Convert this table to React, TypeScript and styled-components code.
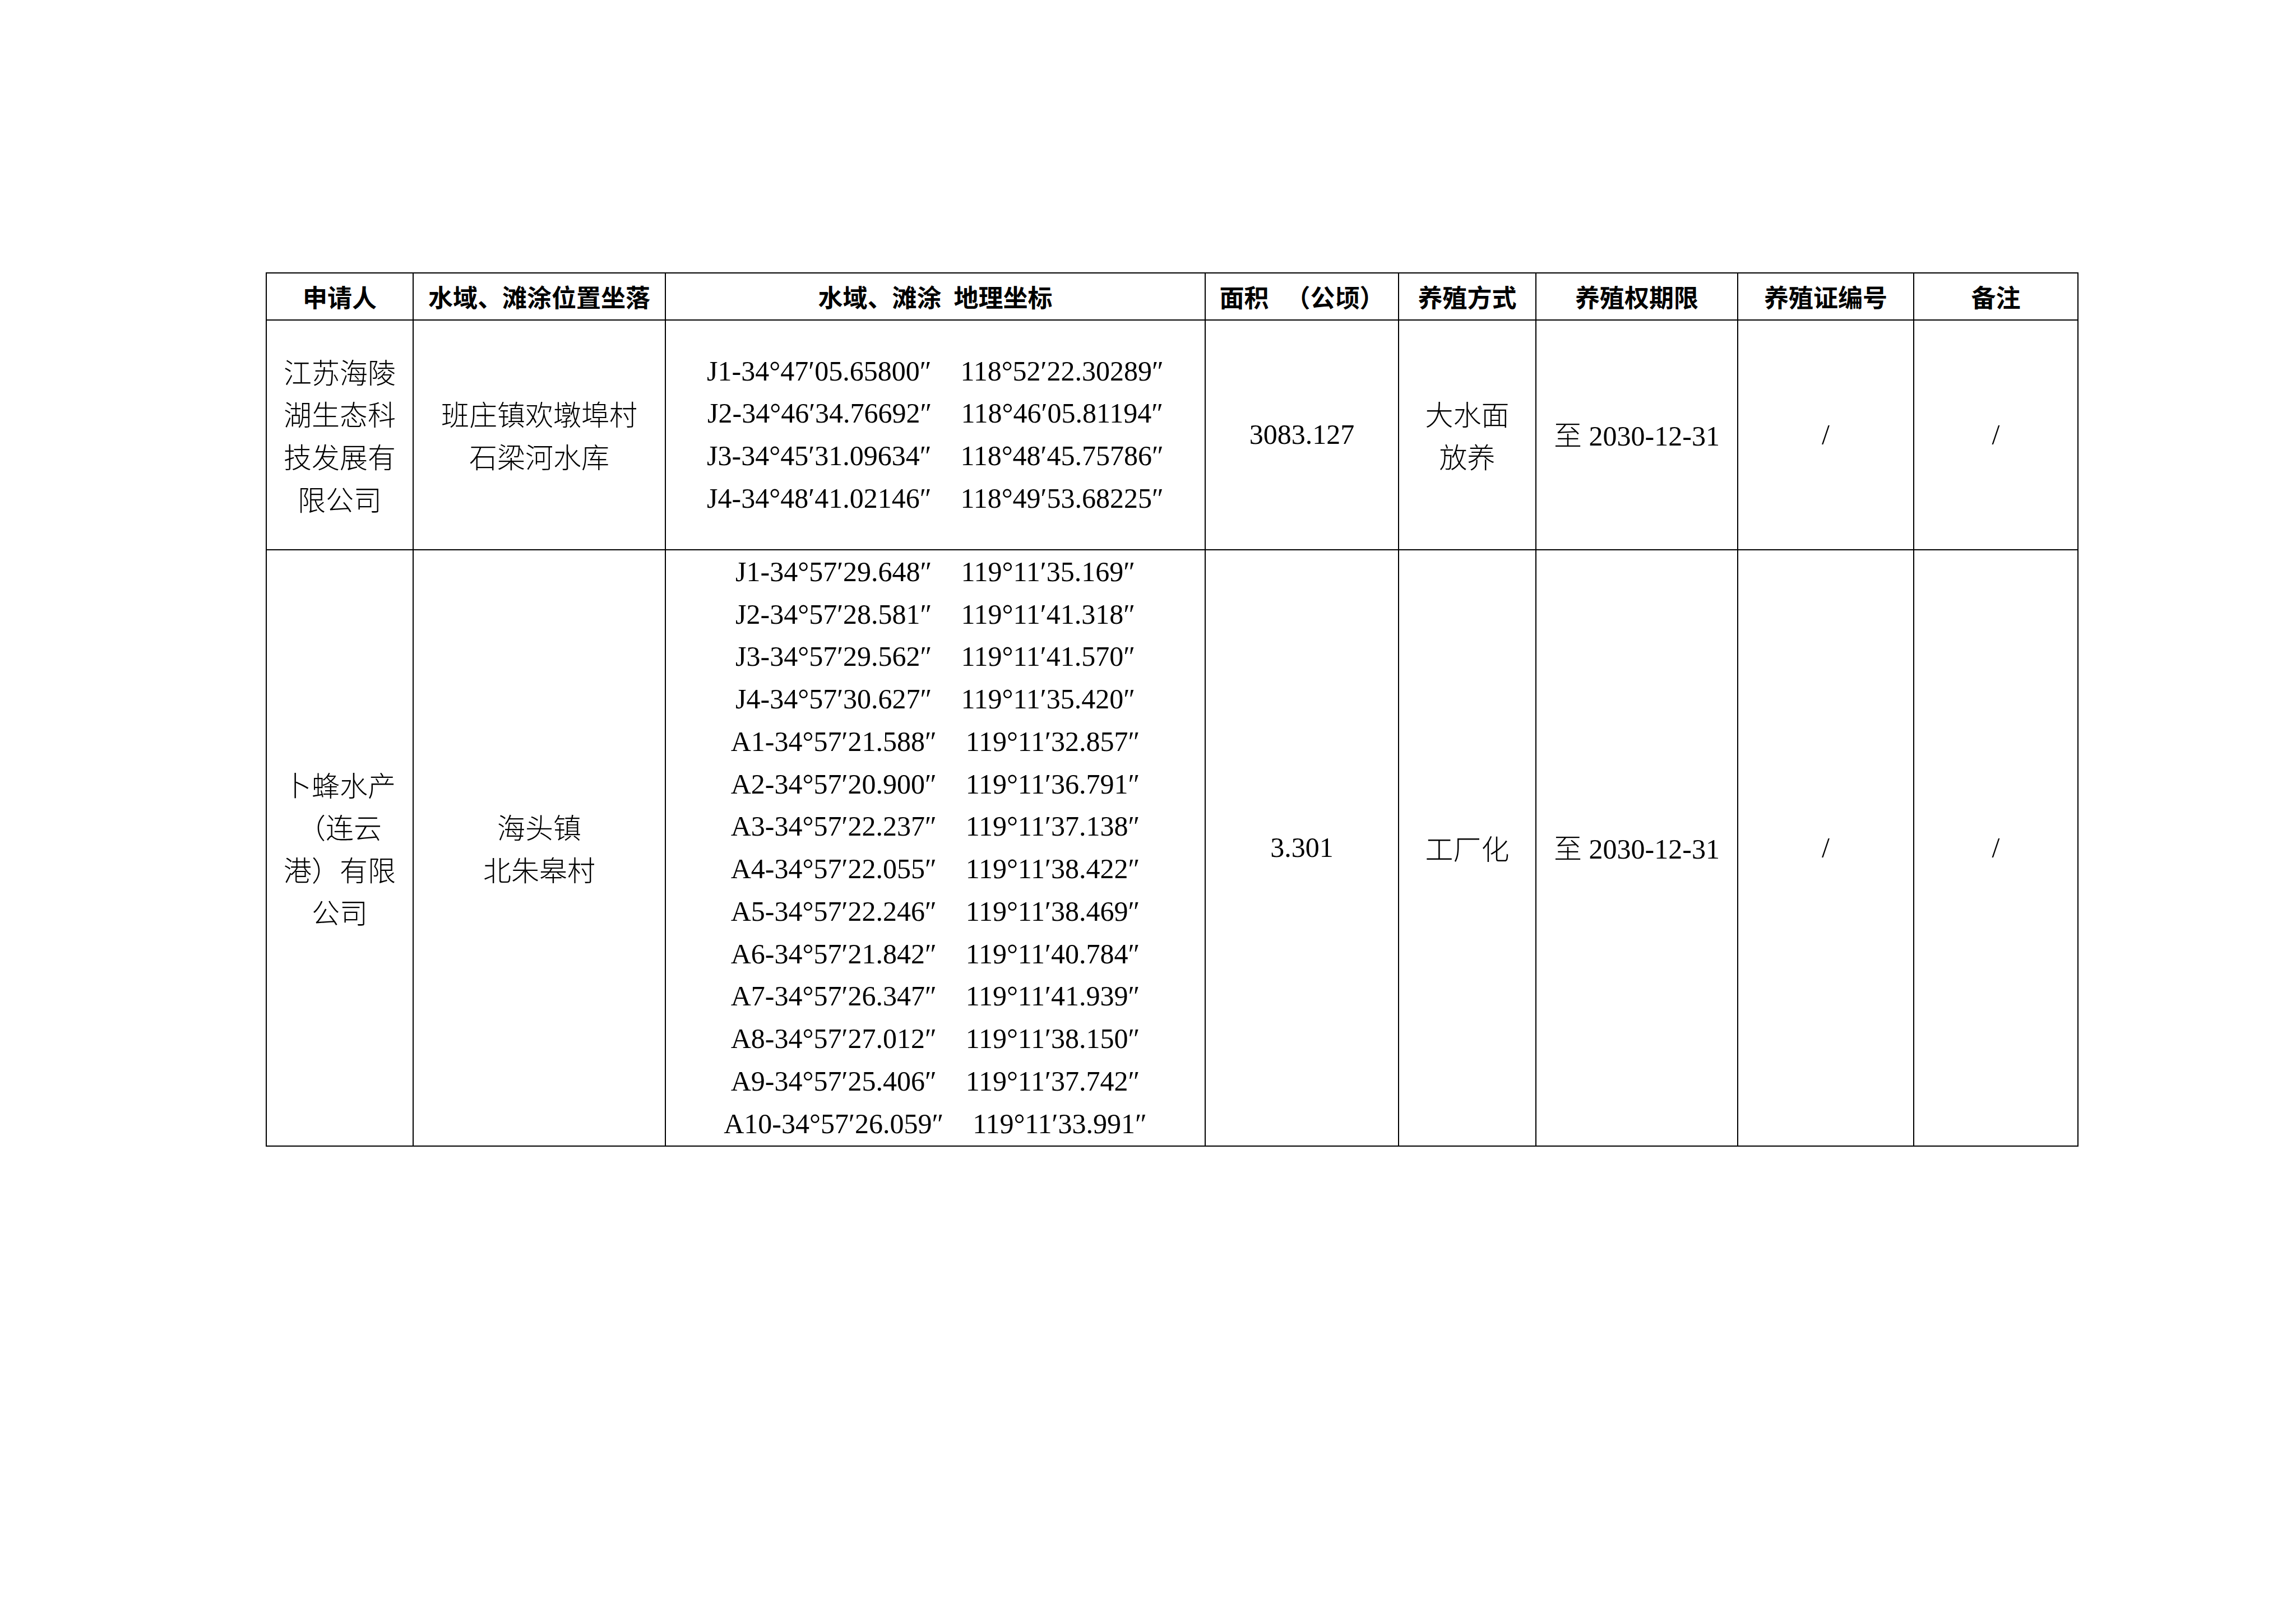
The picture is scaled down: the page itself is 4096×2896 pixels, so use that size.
import React from "react";
import styled, { createGlobalStyle } from "styled-components";

const Global = createGlobalStyle`
  html, body { margin: 0; padding: 0; background: #ffffff; }
  body { width: 4096px; height: 2896px; overflow: hidden; }
`;

const Page = styled.div`
  width: 4096px;
  height: 2896px;
  box-sizing: border-box;
  padding: 486px 0 0 474px;
  background: #ffffff;
  color: #000000;
`;

const Sheet = styled.div`
  display: grid;
  grid-template-columns: 262px 450px 963px 345px 245px 360px 314px 293px;
  grid-template-rows: 84px 410px 1064px;
  width: max-content;
  border-left: 2px solid #000;
  border-top: 2px solid #000;
`;

const BaseCell = styled.div`
  box-sizing: border-box;
  border-right: 2px solid #000;
  border-bottom: 2px solid #000;
  display: flex;
  align-items: center;
  justify-content: center;
  text-align: center;
  overflow: hidden;
`;

const HeadCell = styled(BaseCell)`
  flex-direction: row;
  font-family: "Noto Sans CJK SC", "Noto Sans CJK TC", sans-serif;
  font-weight: 700;
  font-size: 44px;
  line-height: 1;
  white-space: nowrap;
`;

const HeadSpace = styled.span<{ $w: number }>`
  display: inline-block;
  width: ${(p) => p.$w}px;
`;

const TextCell = styled(BaseCell)`
  flex-direction: column;
  font-family: "Noto Sans CJK SC", "Liberation Serif", sans-serif;
  font-weight: 300;
  font-size: 50px;
  line-height: 75.75px;
  white-space: nowrap;
`;

const NumCell = styled(BaseCell)`
  flex-direction: column;
  font-family: "Liberation Serif", "Noto Sans CJK SC", serif;
  font-size: 50px;
  line-height: 75.75px;
  white-space: pre;
`;

const CoordCell = styled(BaseCell)`
  flex-direction: column;
  font-family: "Liberation Serif", "Times New Roman", serif;
  font-size: 50px;
  line-height: 75.75px;
`;

const CoordLine = styled.div`
  display: flex;
  justify-content: center;
  gap: 52px;
  white-space: nowrap;
`;

const Han = styled.span`
  font-family: "Noto Sans CJK SC", sans-serif;
  font-weight: 300;
`;

const Line = styled.div``;

const rowOneCoords: [string, string][] = [
  ["J1-34°47′05.65800″", "118°52′22.30289″"],
  ["J2-34°46′34.76692″", "118°46′05.81194″"],
  ["J3-34°45′31.09634″", "118°48′45.75786″"],
  ["J4-34°48′41.02146″", "118°49′53.68225″"],
];

const rowTwoCoords: [string, string][] = [
  ["J1-34°57′29.648″", "119°11′35.169″"],
  ["J2-34°57′28.581″", "119°11′41.318″"],
  ["J3-34°57′29.562″", "119°11′41.570″"],
  ["J4-34°57′30.627″", "119°11′35.420″"],
  ["A1-34°57′21.588″", "119°11′32.857″"],
  ["A2-34°57′20.900″", "119°11′36.791″"],
  ["A3-34°57′22.237″", "119°11′37.138″"],
  ["A4-34°57′22.055″", "119°11′38.422″"],
  ["A5-34°57′22.246″", "119°11′38.469″"],
  ["A6-34°57′21.842″", "119°11′40.784″"],
  ["A7-34°57′26.347″", "119°11′41.939″"],
  ["A8-34°57′27.012″", "119°11′38.150″"],
  ["A9-34°57′25.406″", "119°11′37.742″"],
  ["A10-34°57′26.059″", "119°11′33.991″"],
];

type RowData = {
  applicant: string[];
  place: string[];
  coords: [string, string][];
  area: string;
  method: string[];
  term: string;
  cert: string;
  note: string;
};

const rows: RowData[] = [
  {
    applicant: ["江苏海陵", "湖生态科", "技发展有", "限公司"],
    place: ["班庄镇欢墩埠村", "石梁河水库"],
    coords: rowOneCoords,
    area: "3083.127",
    method: ["大水面", "放养"],
    term: "2030-12-31",
    cert: "/",
    note: "/",
  },
  {
    applicant: ["卜蜂水产", "（连云", "港）有限", "公司"],
    place: ["海头镇", "北朱皋村"],
    coords: rowTwoCoords,
    area: "3.301",
    method: ["工厂化"],
    term: "2030-12-31",
    cert: "/",
    note: "/",
  },
];

export default function App() {
  return (
    <>
      <Global />
      <Page>
        <Sheet>
          <HeadCell>申请人</HeadCell>
          <HeadCell>水域、滩涂位置坐落</HeadCell>
          <HeadCell>
            水域、滩涂
            <HeadSpace $w={22} />
            地理坐标
          </HeadCell>
          <HeadCell>
            面积
            <HeadSpace $w={30} />
            （公顷）
          </HeadCell>
          <HeadCell>养殖方式</HeadCell>
          <HeadCell>养殖权期限</HeadCell>
          <HeadCell>养殖证编号</HeadCell>
          <HeadCell>备注</HeadCell>

          {rows.map((r, i) => (
            <React.Fragment key={i}>
              <TextCell>
                {r.applicant.map((t) => (
                  <Line key={t}>{t}</Line>
                ))}
              </TextCell>
              <TextCell>
                {r.place.map((t) => (
                  <Line key={t}>{t}</Line>
                ))}
              </TextCell>
              <CoordCell>
                {r.coords.map(([lat, lon]) => (
                  <CoordLine key={lat}>
                    <span>{lat}</span>
                    <span>{lon}</span>
                  </CoordLine>
                ))}
              </CoordCell>
              <NumCell>{r.area}</NumCell>
              <TextCell>
                {r.method.map((t) => (
                  <Line key={t}>{t}</Line>
                ))}
              </TextCell>
              <NumCell>
                <Line>
                  <Han>至</Han> {r.term}
                </Line>
              </NumCell>
              <NumCell>{r.cert}</NumCell>
              <NumCell>{r.note}</NumCell>
            </React.Fragment>
          ))}
        </Sheet>
      </Page>
    </>
  );
}
